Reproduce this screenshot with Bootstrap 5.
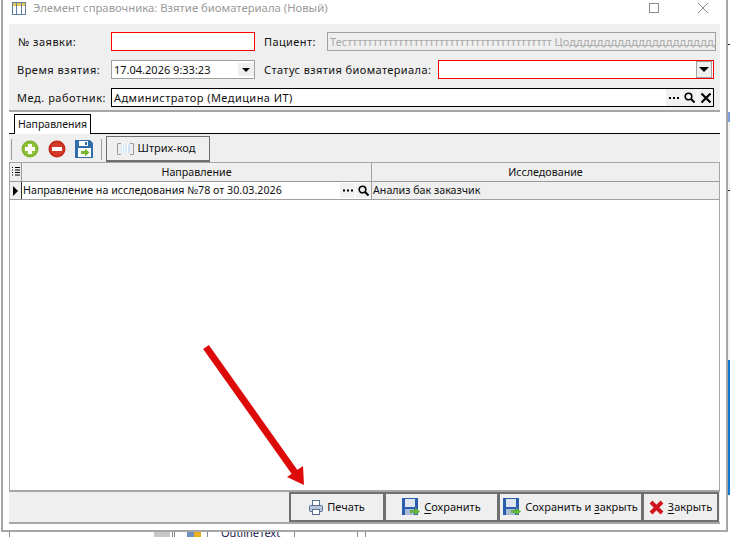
<!doctype html>
<html lang="ru">
<head>
<meta charset="utf-8">
<title>Взятие биоматериала</title>
<link href="https://cdn.jsdelivr.net/npm/bootstrap@5.3.0/dist/css/bootstrap.min.css" rel="stylesheet">
<style>
html,body{margin:0;padding:0;background:#fff;overflow:hidden}
body{font-family:"Noto Sans","DejaVu Sans",sans-serif;font-size:11px;line-height:1;color:#111}
.fxn{flex:none}
.scr{width:730px;height:537px;position:relative;overflow:hidden}
.upper{height:532px}
.win{width:727px;height:532px;margin-left:1px;border:2px solid #a6a6a6;border-top:0;padding:0 6px 6px;background:#fff}
.side{width:2px;height:532px;background:linear-gradient(#fff 0,#fff 44px,#222 44px,#222 45px,#fff 45px,#fff 112px,#7f9fdc 112px,#7f9fdc 122px,#f4f4f4 122px,#f4f4f4 190px,#222 190px,#222 191px,#f4f4f4 191px,#f4f4f4 360px,#0a78d4 360px,#0a78d4 495px,#fff 495px)}
.ttl{height:24px;color:#9a9a9a;font-size:11.3px;padding:0 0 8px 3px;gap:7px}
.ttl .tname{flex:1}
.wmax{margin-right:30px}
.wcls{margin-right:11px}
.pane{height:88px;background:#efefef;border-bottom:2px solid #a6a6a6;padding:8px 6px 0 8px;gap:9px}
.frow{height:19px}
.lab{width:94px;flex:none;white-space:nowrap;letter-spacing:.5px}
.lab1{padding-left:1px}
.lab2{padding:0 0 0 9px;flex:none;white-space:nowrap;letter-spacing:.4px}
.pat{width:72px}
.sta{width:183px}
.fld.form-control{height:19px;min-height:0;border-radius:0;padding:0 2px;font-size:11px;line-height:17px;background:#fff;color:#111;box-shadow:none;white-space:nowrap;overflow:hidden}
.w144{width:144px;flex:none}
.redb.form-control{border:1px solid #f00}
.grayb.form-control{border:1px solid #a0a0a0}
.blkb.form-control{border:1px solid #000;flex:1;width:auto;min-width:0}
.off.form-control{background:#efefef;color:#a8a8a8;border:1px solid #a0a0a0;width:389px;flex:none;margin-right:-2px}
.redsel{width:276px;flex:none;padding:0!important}
.ddbtn{width:16px;background:#efefef;border:1px solid #a0a0a0;height:100%;margin-right:1px}
.ddbtn2{width:16px;background:#efefef;height:13px}
.tri{width:0;height:0;border-left:4px solid transparent;border-right:4px solid transparent;border-top:4px solid #000}
.tri5{border-left-width:5px;border-right-width:5px;border-top-width:5px}
.admin{letter-spacing:.45px}
.minib{width:15px;height:17px;background:#f1f1f1;margin-left:1px}
.tabs.nav{height:22px;border-bottom:1px solid #000;padding:2px 0 0 5px;flex-wrap:nowrap}
.tabitem{width:77px;height:20px;border:1px solid #000;border-bottom:0;background:#fff;margin-bottom:-1px;padding-top:4px;text-align:center;font-size:10.5px}
.tbar{height:28px;background:#efefef;padding:2px 0 0 2px}
.vsep{width:1px;height:21px;background:#9b9b9b}
.tic{margin-left:9px}
.bcbtn.btn{width:104px;height:26px;margin-left:4px;border:1px solid #6e6e6e;border-bottom-width:2px;border-radius:0;background:#efefef;font-size:11px;padding:0 4px 0 0;color:#111}
.gridw{flex:1;border-left:1px solid #a6a6a6;border-right:1px solid #a6a6a6;min-height:0;background:#fff;font-size:10.7px}
.ghead{height:20px;background:#efefef;border-top:1px solid #a6a6a6;border-bottom:1px solid #999}
.grow1{height:18px;border-bottom:1px solid #a0a0a0}
.c0{width:12px;flex:none;border-right:1px solid #333}
.c0h{border-right-color:#999}
.c0r{background:#efefef}
.rowmark{width:0;height:0;border-top:5px solid transparent;border-bottom:5px solid transparent;border-left:5px solid #000}
.c1{width:350px;flex:none;border-right:1px solid #a0a0a0}
.c2{flex:1}
.cell1{padding-left:1px;background:#fff;white-space:nowrap}
.cell2{padding-left:1px;background:#efefef}
.cbtn{width:15px;height:15px;background:#f1f1f1;margin-left:1px}
.cbox{flex:1}
.bbar{height:34px;background:#efefef;border-top:2px solid #a6a6a6;border-bottom:2px solid #a6a6a6;padding-right:1px}
.fbtn.btn{height:30px;border:2px solid #707070;border-radius:0;background:#efefef;color:#111;font-size:11px;padding:0;margin-left:-1px;gap:4px;white-space:nowrap}
.w-a{width:96px;margin-left:0!important}.w-b{width:115px}.w-c{width:145px}.w-d{width:77px}
.under{text-decoration:underline;text-underline-offset:2px}
.lower{height:5px;position:relative;overflow:hidden}
.vl{width:1px;height:5px;background:#888;flex:none}
.gblock{width:16px;height:5px;background:#c8c8c8;flex:none}
.sp1{width:1px}.sp2{width:2px}.sp6{width:6px}.sp7{width:7px}.sp9{width:9px}.sp12{width:12px}.sp13{width:13px}.sp14{width:14px}.sp62{width:62px}.sp144{width:144px}
.otext{font-size:11px;line-height:11px;margin-top:-5px;color:#1a1a50;flex:none}
.arrow{position:absolute;left:0;top:0;pointer-events:none}
</style>
</head>
<body>
<div class="scr">
  <div class="upper d-flex">
    <div class="win d-flex flex-column fxn">
      <div class="ttl d-flex align-items-center">
        <svg width="14" height="13" viewBox="0 0 14 13"><rect x=".5" y=".5" width="13" height="12" fill="#fff" stroke="#5f7f9f"/><rect x="1" y="1" width="12" height="3" fill="#e8c95a"/><path d="M4.500 1v12M9.500 1v12" stroke="#5f7f9f"/></svg>
        <span class="tname">Элемент справочника: Взятие биоматериала (Новый)</span>
        <svg class="wmax" width="11" height="11" viewBox="0 0 11 11"><rect x=".5" y=".5" width="9" height="9" fill="none" stroke="#8a8a8a"/></svg>
        <svg class="wcls" width="12" height="12" viewBox="0 0 12 12"><path d="M1 1l10 10M11 1L1 11" stroke="#8a8a8a" fill="none"/></svg>
      </div>

      <div class="pane d-flex flex-column">
        <div class="frow d-flex align-items-center">
          <div class="lab lab1">№ заявки:</div>
          <input class="form-control fld redb w144" type="text" aria-label="№ заявки">
          <div class="lab2 pat">Пациент:</div>
          <div class="form-control fld off">Тестттттттттттттттттттттттттттттттттттттттт Цодддддддддддддддддддддддддд</div>
        </div>
        <div class="frow d-flex align-items-center">
          <div class="lab">Время взятия:</div>
          <div class="form-control fld grayb w144 d-flex align-items-center justify-content-between pe-0">
            <span>17.04.2026 9:33:23</span>
            <span class="ddbtn2 d-flex align-items-center justify-content-center"><span class="tri"></span></span>
          </div>
          <div class="lab2 sta">Статус взятия биоматериала:</div>
          <div class="form-control fld redb redsel d-flex justify-content-end">
            <span class="ddbtn d-flex align-items-center justify-content-center"><span class="tri tri5"></span></span>
          </div>
        </div>
        <div class="frow d-flex align-items-center">
          <div class="lab">Мед. работник:</div>
          <div class="form-control fld blkb d-flex align-items-center pe-0">
            <span class="cbox admin">Администратор (Медицина ИТ)</span>
            <span class="minib d-flex align-items-center justify-content-center"><svg width="11" height="11" viewBox="0 0 11 11"><path d="M1 6h2M5 6h2M9 6h2" stroke="#000" stroke-width="2"/></svg></span>
            <span class="minib d-flex align-items-center justify-content-center"><svg width="11" height="11" viewBox="0 0 11 11"><circle cx="4.500" cy="4.500" r="3.300" fill="none" stroke="#000" stroke-width="1.600"/><path d="M7 7l3.500 3.500" stroke="#000" stroke-width="2"/></svg></span>
            <span class="minib d-flex align-items-center justify-content-center"><svg width="12" height="12" viewBox="0 0 12 12"><path d="M1.500 1.500l9 9M10.500 1.500l-9 9" stroke="#000" stroke-width="2.200"/></svg></span>
          </div>
        </div>
      </div>

      <div class="nav tabs"><div class="tabitem">Направления</div></div>

      <div class="tbar d-flex align-items-center">
        <span class="vsep"></span>
        <svg class="tic" width="18" height="18" viewBox="0 0 18 18"><circle cx="9" cy="9" r="8.500" fill="#7db32a"/><circle cx="9" cy="9" r="6.800" fill="#8fc23a"/><path d="M9 4v10M4 9h10" stroke="#fff" stroke-width="4"/></svg>
        <svg class="tic" width="18" height="18" viewBox="0 0 18 18"><circle cx="9" cy="9" r="8.500" fill="#c42b1c"/><circle cx="9" cy="9" r="6.800" fill="#d23a2a"/><path d="M4 9h10" stroke="#fff" stroke-width="4"/></svg>
        <svg class="tic" width="18" height="18" viewBox="0 0 18 18"><path d="M0 0h15l3 3v15H0z" fill="#2f6ea6"/><rect x="4" y="1" width="9" height="5" fill="#fff"/><rect x="10" y="2" width="2" height="3" fill="#2f6ea6"/><rect x="3" y="8" width="13" height="9" fill="#fff"/><path d="M6 11h4V8.500l4.500 4-4.500 4V14H6z" fill="#76b82a"/></svg>
        <span class="vsep ms-2"></span>
        <button class="btn bcbtn d-flex align-items-center justify-content-center gap-1" type="button">
          <svg width="17" height="12" viewBox="0 0 17 12"><path d="M4 .5H1A.5.5 0 0 0 .5 1v10a.5.5 0 0 0 .5.5h3M13 .5h3a.5.5 0 0 1 .5.5v10a.5.5 0 0 1-.5.5h-3" fill="none" stroke="#999"/><rect x="4" y="2" width="9" height="8" fill="#cfe4f7"/><path d="M5.500 2v8M8 2v8M10.500 2v8" stroke="#fff"/></svg>
          <span>Штрих-код</span>
        </button>
      </div>

      <div class="gridw d-flex flex-column">
        <div class="ghead d-flex">
          <div class="c0 c0h d-flex align-items-center justify-content-center"><svg width="8" height="12" viewBox="0 0 8 12"><path d="M0 1.500h1M3 1.500h5M0 4h1M3 4h5M0 6.500h1M3 6.500h5M0 9h1M3 9h5" stroke="#000"/></svg></div>
          <div class="c1 d-flex align-items-center justify-content-center">Направление</div>
          <div class="c2 d-flex align-items-center justify-content-center">Исследование</div>
        </div>
        <div class="grow1 d-flex">
          <div class="c0 c0r d-flex align-items-center justify-content-center"><span class="rowmark"></span></div>
          <div class="c1 cell1 d-flex align-items-center">
            <span class="cbox">Направление на исследования №78 от 30.03.2026</span>
            <span class="cbtn d-flex align-items-center justify-content-center"><svg width="11" height="9" viewBox="0 0 11 9"><path d="M1 4.500h2M5 4.500h2M9 4.500h2" stroke="#000" stroke-width="2"/></svg></span>
            <span class="cbtn d-flex align-items-center justify-content-center"><svg width="11" height="11" viewBox="0 0 11 11"><circle cx="4.500" cy="4.500" r="3.300" fill="none" stroke="#000" stroke-width="1.600"/><path d="M7 7l3.500 3.500" stroke="#000" stroke-width="2"/></svg></span>
          </div>
          <div class="c2 cell2 d-flex align-items-center">Анализ бак заказчик</div>
        </div>
      </div>

      <div class="bbar d-flex justify-content-end align-items-center">
        <button class="btn fbtn w-a d-flex align-items-center justify-content-center" type="button">
          <svg width="14" height="15" viewBox="0 0 14 15"><rect x="3.500" y=".5" width="7" height="5" fill="#fff" stroke="#5a6f90"/><rect x=".5" y="5.500" width="13" height="6" rx="1" fill="#b9c6da" stroke="#5a6f90"/><rect x="3.500" y="9.500" width="7" height="5" fill="#fff" stroke="#5a6f90"/></svg>
          <span>Печать</span>
        </button>
        <button class="btn fbtn w-b d-flex align-items-center justify-content-center" type="button">
          <svg width="18" height="18" viewBox="0 0 18 18"><path d="M0 0h16v17H0z" fill="#2a5db0"/><rect x="3" y="1" width="10" height="8" fill="#dfe6ef"/><rect x="3" y="11" width="9" height="6" fill="#a9bbd4"/><path d="M8 12h5V9.500l5 4-5 4V15H8z" fill="#63b53b"/></svg>
          <span><span class="under">С</span>охранить</span>
        </button>
        <button class="btn fbtn w-c d-flex align-items-center justify-content-center" type="button">
          <svg width="18" height="18" viewBox="0 0 18 18"><path d="M0 0h16v17H0z" fill="#2a5db0"/><rect x="3" y="1" width="10" height="8" fill="#dfe6ef"/><rect x="3" y="11" width="9" height="6" fill="#a9bbd4"/><path d="M8 12h5V9.500l5 4-5 4V15H8z" fill="#63b53b"/></svg>
          <span>Сохранить и <span class="under">з</span>акрыть</span>
        </button>
        <button class="btn fbtn w-d d-flex align-items-center justify-content-center" type="button">
          <svg width="15" height="15" viewBox="0 0 15 15"><path d="M2 2l11 11M13 2L2 13" stroke="#d0141c" stroke-width="4"/></svg>
          <span><span class="under">З</span>акрыть</span>
        </button>
      </div>
    </div>
    <div class="side fxn"></div>
  </div>
  <div class="lower d-flex">
    <span class="sp9 fxn"></span><span class="vl"></span>
    <span class="sp144 fxn"></span><span class="gblock"></span>
    <span class="sp2 fxn"></span><span class="vl"></span><span class="sp1 fxn"></span><span class="vl"></span>
    <span class="sp12 fxn"></span>
    <svg class="fxn" width="14" height="5" viewBox="0 0 14 5"><rect width="7" height="5" fill="#6f8fc0"/><rect x="7" width="7" height="5" fill="#e8b020"/></svg>
    <span class="sp6 fxn"></span><span class="vl"></span>
    <span class="sp13 fxn"></span><span class="otext">OutlineText</span>
    <span class="sp14 fxn"></span><span class="vl"></span>
    <span class="sp62 fxn"></span><span class="vl"></span>
    <span class="sp7 fxn"></span><span class="vl"></span>
  </div>
  <svg class="arrow" width="730" height="537" viewBox="0 0 730 537" aria-hidden="true">
    <path d="M206 347L296 474" stroke="#dd0a0a" stroke-width="7" fill="none"/>
    <path d="M304 485L287 477L303 466z" fill="#dd0a0a"/>
  </svg>
</div>
<script src="https://cdn.jsdelivr.net/npm/bootstrap@5.3.0/dist/js/bootstrap.bundle.min.js"></script>
</body>
</html>
